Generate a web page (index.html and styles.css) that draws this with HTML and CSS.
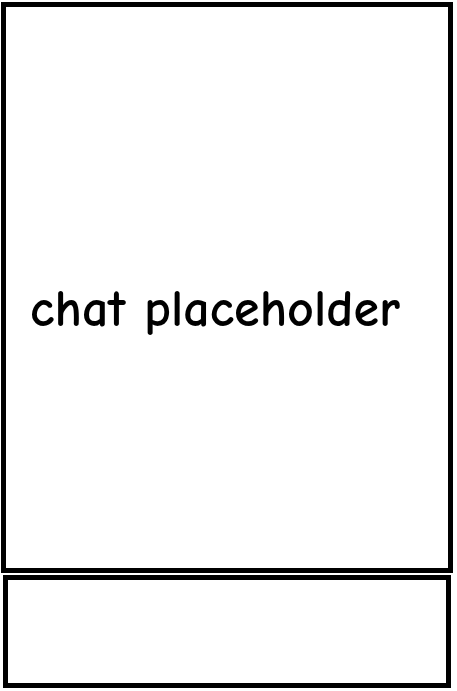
FILE: index.html
```html
<!DOCTYPE html>
<html lang="en">
<head>
    <meta charset="UTF-8">
    <meta name="viewport" content="width=device-width, initial-scale=1.0">
    <title>Chat</title>
    <link rel="stylesheet" href="styles.css">
</head>
<body>
    <div class="page">
        <div class="chatBox">
            <p class="placeholder">chat placeholder</p>
        </div>
        <div class="inputBox"></div>
    </div>
</body>
</html>
```

FILE: styles.css
```css
body {
    margin: 0;
    background: #fff;
    font-family: "Comic Sans MS", "Comic Neue", "DejaVu Sans", sans-serif;
    color: #000;
}
.page {
    display: flex;
    flex-direction: column;
    gap: 2px;
    padding-top: 2px;
}
.chatBox {
    box-sizing: border-box;
    width: 452px;
    height: 571px;
    margin-left: 1px;
    border: 5px solid #000;
    padding: 278px 0 0 24px;
}
.placeholder {
    margin: 0;
    font-size: 52px;
    font-weight: 700;
    line-height: 48px;
    white-space: nowrap;
}
.inputBox {
    box-sizing: border-box;
    width: 448px;
    height: 113px;
    margin-left: 3px;
    border: 5px solid #000;
}
```
